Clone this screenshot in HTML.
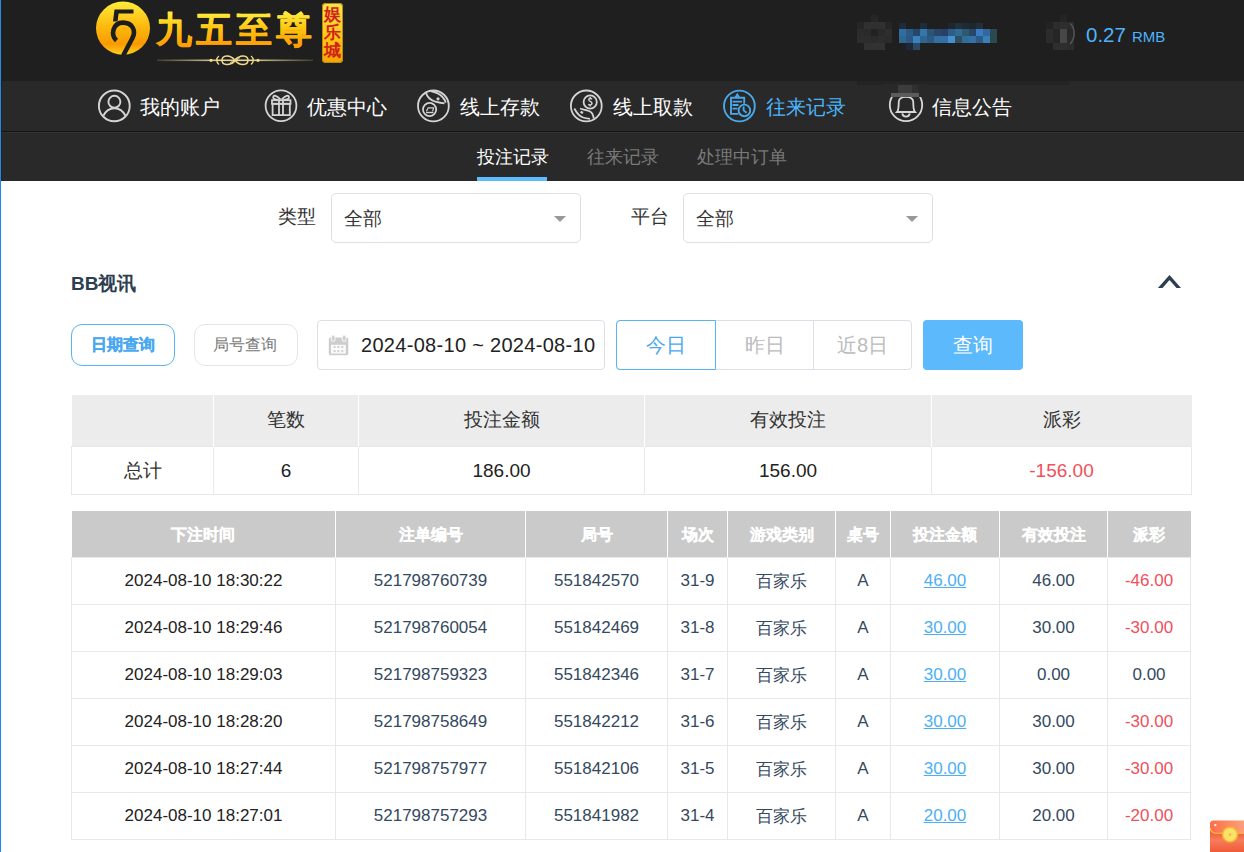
<!DOCTYPE html>
<html><head><meta charset="utf-8">
<style>
*{margin:0;padding:0;box-sizing:border-box}
html,body{width:1244px;height:852px;overflow:hidden;background:#fff;font-family:"Liberation Sans",sans-serif;color:#333}
.a{position:absolute}
.hdr{left:0;top:0;width:1244px;height:81px;background:#1f1f1f}
.nav{left:0;top:81px;width:1244px;height:50px;background:#292929}
.navl1{left:0;top:131px;width:1244px;height:1px;background:#121212}
.navl2{left:0;top:132px;width:1244px;height:1px;background:#333}
.sub{left:0;top:133px;width:1244px;height:48px;background:#292929}
.lb{left:0;top:0;width:1px;height:852px;background:#1a8cf0}
.lb2{left:1px;top:0;width:1px;height:181px;background:#2a211c}
.ni{font-size:20px;line-height:20px;color:#fff;white-space:nowrap}
.ic{width:33px;height:33px}
.st{font-size:18px;line-height:18px;white-space:nowrap}
.lbl{font-size:19px;line-height:19px;color:#333}
.sel{border:1px solid #dcdfe6;border-radius:5px;height:50px;width:250px;background:#fff}
.sel .v{position:absolute;left:12px;top:15px;font-size:19px;line-height:19px;color:#333}
.sel .ar{position:absolute;right:14px;top:22px;width:0;height:0;border-left:6px solid transparent;border-right:6px solid transparent;border-top:6px solid #999}
table{border-collapse:collapse;table-layout:fixed}
.sum{left:71px;top:395px;width:1120px}
.sum th{background:#ececec;height:51px;font-weight:normal;font-size:19px;color:#333;border-left:1px solid #fff}
.sum td{height:48px;font-size:19px;color:#222;text-align:center;border:1px solid #e8e8e8;padding-top:2px}
.sum td:first-child{color:#333}
.mt{left:71px;top:511px;width:1119px}
.mt th{background:#cacaca;height:46px;font-weight:bold;font-size:16px;color:#fff;border-left:1px solid #fff;padding-top:3px;-webkit-text-stroke:0.2px #fff}
.mt td{height:47px;font-size:17px;color:#34495e;text-align:center;border:1px solid #e8e8e8;padding-top:1px}
.mt td:first-child{color:#222}
.lk{color:#4db0f5;text-decoration:underline}
td.rd,.rd{color:#f0505a}
</style></head>
<body>
<div class="a hdr"></div>
<div class="a nav"></div>
<div class="a navl1"></div>
<div class="a navl2"></div>
<div class="a sub"></div>
<div class="a" style="left:857px;top:81px;width:213px;height:4px;background:#242424"></div>
<div class="a lb"></div>
<div class="a lb2"></div>

<!-- LOGO -->
<svg class="a" style="left:92px;top:0" width="60" height="60" viewBox="0 0 60 60">
<defs><linearGradient id="gc" x1="0" y1="0" x2="0" y2="1"><stop offset="0" stop-color="#ffec3a"/><stop offset="0.45" stop-color="#fdbb10"/><stop offset="0.8" stop-color="#f99a00"/><stop offset="1" stop-color="#ffd21e"/></linearGradient></defs>
<ellipse cx="31" cy="28.2" rx="27" ry="26.6" fill="url(#gc)"/>
<path d="M22.5 9.5 L41.5 9.5 L41.5 13.6 L26.6 13.6 L25.6 21.2 L21 21.6 Z" fill="#1d1d1d"/>
<path d="M24.5 40.5 C18.5 35 20.5 22.8 31 22.6 C40.5 22.6 44.5 31 40.2 38.5 L31.2 55.5" fill="none" stroke="#1d1d1d" stroke-width="4.6"/>
</svg>
<svg class="a" style="left:150px;top:0" width="170" height="52" viewBox="0 0 170 52">
<defs><linearGradient id="gt" x1="0" y1="0" x2="0" y2="1" gradientUnits="objectBoundingBox"><stop offset="0.1" stop-color="#ffea3c"/><stop offset="0.5" stop-color="#ffc20e"/><stop offset="1" stop-color="#ff9200"/></linearGradient></defs>
<text x="6" y="42" font-size="36" font-weight="bold" letter-spacing="4" fill="url(#gt)" stroke="url(#gt)" stroke-width="0.5" stroke-linejoin="round">九五至尊</text>
</svg>
<svg class="a" style="left:150px;top:50px" width="170" height="18" viewBox="0 0 170 18">
<defs><linearGradient id="gl" x1="0" x2="1"><stop offset="0" stop-color="#c8b67a" stop-opacity="0.2"/><stop offset="0.4" stop-color="#e6d59a"/><stop offset="0.6" stop-color="#e6d59a"/><stop offset="1" stop-color="#c8b67a" stop-opacity="0.2"/></linearGradient></defs>
<rect x="7" y="9.5" width="156" height="1.6" fill="url(#gl)"/>
<circle cx="61" cy="10.3" r="1.6" fill="#f2dc8a"/><circle cx="108" cy="10.3" r="1.6" fill="#f2dc8a"/>
<path d="M69 6 C66 8 66 12.5 69 14.5 M101 6 C104 8 104 12.5 101 14.5" fill="none" stroke="#f2dc8a" stroke-width="1.3"/>
<path d="M85 10.3 C80 4 72 5 72 10.3 C72 15.5 80 16.5 85 10.3 C90 4 98 5 98 10.3 C98 15.5 90 16.5 85 10.3 Z" fill="none" stroke="#f2dc8a" stroke-width="1.5"/>
<path d="M80 13 L88 7 M82 14 L90 7.5" stroke="#e8d490" stroke-width="0.9"/>
</svg>
<div class="a" style="left:322px;top:3px;width:21px;height:60px;border-radius:4px;background:linear-gradient(#ffe64a,#ffc414 60%,#f5a400);box-shadow:0 0 0 1px #b98a10 inset"></div>
<div class="a" style="left:324px;top:6px;width:17px;font-size:17px;line-height:18px;font-weight:bold;color:#d0201a;text-align:center">娱乐城</div>


<!-- header right -->
<div class="a" style="left:871px;top:15px;width:7px;height:7px;background:#262626"></div>
<div class="a" style="left:857px;top:22px;width:7px;height:7px;background:#262626"></div>
<div class="a" style="left:864px;top:22px;width:7px;height:7px;background:#303030"></div>
<div class="a" style="left:871px;top:22px;width:7px;height:7px;background:#303030"></div>
<div class="a" style="left:878px;top:22px;width:7px;height:7px;background:#303030"></div>
<div class="a" style="left:885px;top:22px;width:7px;height:7px;background:#262626"></div>
<div class="a" style="left:857px;top:29px;width:7px;height:7px;background:#2c2c2c"></div>
<div class="a" style="left:864px;top:29px;width:7px;height:7px;background:#2a2a2a"></div>
<div class="a" style="left:871px;top:29px;width:7px;height:7px;background:#222222"></div>
<div class="a" style="left:878px;top:29px;width:7px;height:7px;background:#2a2a2a"></div>
<div class="a" style="left:885px;top:29px;width:7px;height:7px;background:#2e2e2e"></div>
<div class="a" style="left:857px;top:36px;width:7px;height:7px;background:#2d2d2d"></div>
<div class="a" style="left:864px;top:36px;width:7px;height:7px;background:#2d2d2d"></div>
<div class="a" style="left:871px;top:36px;width:7px;height:7px;background:#2b2b2b"></div>
<div class="a" style="left:878px;top:36px;width:7px;height:7px;background:#2d2d2d"></div>
<div class="a" style="left:885px;top:36px;width:7px;height:7px;background:#2b2b2b"></div>
<div class="a" style="left:864px;top:43px;width:7px;height:7px;background:#323232"></div>
<div class="a" style="left:871px;top:43px;width:7px;height:7px;background:#323232"></div>
<div class="a" style="left:878px;top:43px;width:7px;height:7px;background:#323232"></div>
<div class="a" style="left:899px;top:23px;width:7px;height:6px;background:#1f2b38"></div>
<div class="a" style="left:920px;top:23px;width:7px;height:6px;background:#1f2c3a"></div>
<div class="a" style="left:948px;top:23px;width:7px;height:6px;background:#1e2630"></div>
<div class="a" style="left:955px;top:23px;width:7px;height:6px;background:#22303c"></div>
<div class="a" style="left:962px;top:23px;width:7px;height:6px;background:#1f2a36"></div>
<div class="a" style="left:969px;top:23px;width:7px;height:6px;background:#1e2630"></div>
<div class="a" style="left:976px;top:23px;width:7px;height:6px;background:#222e3a"></div>
<div class="a" style="left:899px;top:29px;width:7px;height:7px;background:#2f6ea3"></div>
<div class="a" style="left:906px;top:29px;width:7px;height:7px;background:#2b5a85"></div>
<div class="a" style="left:913px;top:29px;width:7px;height:7px;background:#27466a"></div>
<div class="a" style="left:920px;top:29px;width:7px;height:7px;background:#3476a8"></div>
<div class="a" style="left:927px;top:29px;width:7px;height:7px;background:#2c5573"></div>
<div class="a" style="left:934px;top:29px;width:7px;height:7px;background:#29476b"></div>
<div class="a" style="left:941px;top:29px;width:7px;height:7px;background:#28416a"></div>
<div class="a" style="left:948px;top:29px;width:7px;height:7px;background:#2d5c85"></div>
<div class="a" style="left:955px;top:29px;width:7px;height:7px;background:#306a96"></div>
<div class="a" style="left:962px;top:29px;width:7px;height:7px;background:#2e5a70"></div>
<div class="a" style="left:969px;top:29px;width:7px;height:7px;background:#27466a"></div>
<div class="a" style="left:976px;top:29px;width:7px;height:7px;background:#3a7bbf"></div>
<div class="a" style="left:983px;top:29px;width:7px;height:7px;background:#3466a0"></div>
<div class="a" style="left:990px;top:29px;width:7px;height:7px;background:#2a4a50"></div>
<div class="a" style="left:899px;top:36px;width:7px;height:7px;background:#2f6793"></div>
<div class="a" style="left:906px;top:36px;width:7px;height:7px;background:#2c5785"></div>
<div class="a" style="left:913px;top:36px;width:7px;height:7px;background:#3a82bd"></div>
<div class="a" style="left:920px;top:36px;width:7px;height:7px;background:#2f6591"></div>
<div class="a" style="left:927px;top:36px;width:7px;height:7px;background:#2d5a85"></div>
<div class="a" style="left:934px;top:36px;width:7px;height:7px;background:#336fa3"></div>
<div class="a" style="left:941px;top:36px;width:7px;height:7px;background:#3470a8"></div>
<div class="a" style="left:948px;top:36px;width:7px;height:7px;background:#4590d0"></div>
<div class="a" style="left:955px;top:36px;width:7px;height:7px;background:#2c5060"></div>
<div class="a" style="left:962px;top:36px;width:7px;height:7px;background:#316d9a"></div>
<div class="a" style="left:969px;top:36px;width:7px;height:7px;background:#3570a8"></div>
<div class="a" style="left:976px;top:36px;width:7px;height:7px;background:#2d5a85"></div>
<div class="a" style="left:983px;top:36px;width:7px;height:7px;background:#3a80b8"></div>
<div class="a" style="left:990px;top:36px;width:7px;height:7px;background:#2a4a50"></div>
<div class="a" style="left:906px;top:43px;width:7px;height:7px;background:#1f2838"></div>
<div class="a" style="left:913px;top:43px;width:7px;height:7px;background:#2c4a62"></div>
<div class="a" style="left:1060px;top:15px;width:7px;height:7px;background:#242424"></div>
<div class="a" style="left:1046px;top:22px;width:7px;height:7px;background:#232323"></div>
<div class="a" style="left:1053px;top:22px;width:7px;height:7px;background:#2d2d2d"></div>
<div class="a" style="left:1060px;top:22px;width:7px;height:7px;background:#2e2e2e"></div>
<div class="a" style="left:1067px;top:22px;width:7px;height:7px;background:#2c2c2c"></div>
<div class="a" style="left:1046px;top:29px;width:7px;height:7px;background:#2c2c2c"></div>
<div class="a" style="left:1053px;top:29px;width:7px;height:7px;background:#262626"></div>
<div class="a" style="left:1060px;top:29px;width:7px;height:7px;background:#474747"></div>
<div class="a" style="left:1067px;top:29px;width:7px;height:7px;background:#282828"></div>
<div class="a" style="left:1046px;top:36px;width:7px;height:7px;background:#2c2c2c"></div>
<div class="a" style="left:1053px;top:36px;width:7px;height:7px;background:#262626"></div>
<div class="a" style="left:1060px;top:36px;width:7px;height:7px;background:#474747"></div>
<div class="a" style="left:1067px;top:36px;width:7px;height:7px;background:#2a2a2a"></div>
<div class="a" style="left:1053px;top:43px;width:7px;height:7px;background:#2e2e2e"></div>
<div class="a" style="left:1060px;top:43px;width:7px;height:7px;background:#2e2e2e"></div>
<div class="a" style="left:1067px;top:43px;width:7px;height:7px;background:#2c2c2c"></div>
<svg class="a" style="left:1060px;top:18px" width="20" height="32"><path d="M10 5.5 C15 9 16 20 10 26" fill="none" stroke="#555" stroke-width="1.5"/></svg>

<div class="a" style="left:1086px;top:23px;font-size:20.5px;line-height:24px;color:#4db3fb">0.27</div>
<div class="a" style="left:1132px;top:28px;font-size:15px;line-height:18px;color:#4db3fb">RMB</div>


<!-- NAV ICONS -->
<svg class="a" style="left:94px;top:86px" width="40" height="40" viewBox="0 0 40 40" fill="none" stroke="#d4d4d4" stroke-width="1.9">
<circle cx="20.3" cy="19.9" r="15.4"/><circle cx="20.4" cy="15.8" r="6"/><path d="M9.3 29.8 C12 24.5 16 22.2 20.4 22.2 C24.8 22.2 28.8 24.5 31.5 29.8"/></svg>
<svg class="a" style="left:261px;top:86px" width="40" height="40" viewBox="0 0 40 40" fill="none" stroke="#d4d4d4" stroke-width="1.8">
<circle cx="20" cy="19.8" r="15.4"/><rect x="11" y="14.2" width="18.5" height="3.6"/><rect x="11.6" y="17.8" width="17.2" height="11.3"/><path d="M18 14.2 V29.1 M22 14.2 V29.1"/><path d="M19.6 13.6 C16 9.5 12.5 8.8 12.2 11 C12 12.8 14 13.8 17.5 14"/><path d="M20.6 13.6 C24.2 9.5 27.7 8.8 28 11 C28.2 12.8 26.2 13.8 22.7 14"/></svg>
<svg class="a" style="left:413px;top:86px" width="40" height="40" viewBox="0 0 40 40" fill="none" stroke="#d4d4d4" stroke-width="1.8">
<circle cx="20.4" cy="19.9" r="15.4"/><circle cx="16.6" cy="23.5" r="6.6"/><path d="M13 26.5 H20.5" stroke-width="1.4"/><path d="M13.4 25.3 L15.2 21.8 H20.6 L19.6 25.3" stroke-width="1.2"/>
<path d="M12.6 5.8 C14 11 17.5 14.2 22 15.5 C25 16.3 27.5 17 31.5 17.3"/><path d="M17.8 5 C22 6 26 7.5 28.5 10 C30.5 12 32.5 14.5 32.5 16.8"/><circle cx="25" cy="12.8" r="1.6" fill="#d4d4d4" stroke="none"/></svg>
<svg class="a" style="left:566px;top:86px" width="40" height="40" viewBox="0 0 40 40" fill="none" stroke="#d4d4d4" stroke-width="1.8">
<circle cx="20.3" cy="19.9" r="15.4"/><circle cx="24.2" cy="16" r="6.6"/><path d="M26 13.2 C25 12 22.5 12.3 22.8 14 C23 15.5 26 15.5 26 17.3 C26 19.2 23.2 19.5 22.3 18.3 M24.2 11 V12.2 M24.2 19.4 V20.6" stroke-width="1.5"/>
<path d="M8.3 22.5 C10.5 26.5 13.5 30.5 17 31.5 C19.5 32.3 22 32.6 24 32.8"/><path d="M14 22.5 C17.5 23.5 20 24 23 25 C26 26.2 27.5 29 27.6 32.6"/><path d="M14.5 25.8 L17 27" stroke-width="2.2"/></svg>
<svg class="a" style="left:719px;top:86px" width="40" height="40" viewBox="0 0 40 40" fill="none" stroke="#4aa8ea" stroke-width="1.9">
<circle cx="20.4" cy="20" r="15.4"/><path d="M19.5 27.9 H12 V11.8 H25.2 V17.8"/><path d="M16.5 11.6 L18.3 8.6 L20.1 11.6"/><path d="M13.5 15.6 H23 M13.5 19 H19.5 M13.5 22.6 H18.5"/><circle cx="25.4" cy="24.4" r="5.8"/><path d="M24.6 20.6 V24.4 L27.6 26.8"/></svg>
<svg class="a" style="left:886px;top:85px" width="40" height="40" viewBox="0 0 40 40" fill="none" stroke="#d8d8d8" stroke-width="1.8">
<circle cx="20" cy="20" r="16.2"/><path d="M11 27 C13 25 12.5 20 12.8 16.5 C13.2 12.8 16 11.8 20 11.8 C24 11.8 26.8 12.8 27.2 16.5 C27.5 20 27 25 29 27 Z"/><path d="M16.3 28.3 C16.5 30.5 18 31.6 20 31.6 C22 31.6 23.5 30.5 23.7 28.3"/></svg>
<div class="a" style="left:884px;top:84px;width:44px;height:13px;background:#292929"></div>
<div class="a" style="left:898px;top:85px;width:14px;height:8px;background:#3c3c3c"></div>
<div class="a" style="left:891px;top:93px;width:28px;height:4px;background:#5c5c5c"></div>
<div class="a" style="left:912px;top:85px;width:6px;height:8px;background:#303030"></div>

<!-- NAV -->
<div class="a ni" style="left:140px;top:97px">我的账户</div>
<div class="a ni" style="left:307px;top:97px">优惠中心</div>
<div class="a ni" style="left:460px;top:97px">线上存款</div>
<div class="a ni" style="left:613px;top:97px">线上取款</div>
<div class="a ni" style="left:766px;top:97px;color:#4bb4fb">往来记录</div>
<div class="a ni" style="left:932px;top:97px">信息公告</div>

<!-- SUBTABS -->
<div class="a st" style="left:477px;top:148px;color:#fff">投注记录</div>
<div class="a st" style="left:587px;top:148px;color:#7a7a7a">往来记录</div>
<div class="a st" style="left:697px;top:148px;color:#7a7a7a">处理中订单</div>
<div class="a" style="left:477px;top:177px;width:70px;height:4px;background:#5bbcff"></div>

<!-- FILTERS -->
<div class="a lbl" style="left:278px;top:207px">类型</div>
<div class="a sel" style="left:331px;top:193px"><span class="v">全部</span><span class="ar"></span></div>
<div class="a lbl" style="left:631px;top:207px">平台</div>
<div class="a sel" style="left:683px;top:193px"><span class="v">全部</span><span class="ar"></span></div>

<!-- section title -->
<div class="a" style="left:71px;top:274px;font-size:19px;line-height:19px;font-weight:bold;color:#2c3e50">BB视讯</div>
<svg class="a" style="left:1150px;top:270px" width="40" height="22" viewBox="1150 270 40 22"><path d="M1157.9 288 L1169.5 274.9 L1181 288 L1176.5 288 L1169.5 279.9 L1162.5 288 Z" fill="#2c3e50"/></svg>

<!-- query row -->
<div class="a" style="left:71px;top:324px;width:104px;height:42px;border:1px solid #5ab4f0;border-radius:11px"></div>
<div class="a" style="left:91px;top:337px;font-size:16px;line-height:16px;font-weight:bold;color:#4aa8f0;-webkit-text-stroke:0.3px #4aa8f0">日期查询</div>
<div class="a" style="left:194px;top:324px;width:104px;height:42px;border:1px solid #e6e6e6;border-radius:11px"></div>
<div class="a" style="left:213px;top:337px;font-size:16px;line-height:16px;color:#777">局号查询</div>

<div class="a" style="left:317px;top:320px;width:288px;height:50px;border:1px solid #dcdfe6;border-radius:4px"></div>
<svg class="a" style="left:324px;top:330px" width="30" height="30" viewBox="0 0 30 30">
<rect x="4.8" y="7.4" width="19.5" height="17.8" rx="1.6" fill="#cdcdcd"/>
<rect x="7" y="14.8" width="14.8" height="8.8" fill="#fafafa"/>
<rect x="7.4" y="5.3" width="3.6" height="6" rx="1.8" fill="#cdcdcd" stroke="#f2f2f2" stroke-width="1.2"/>
<rect x="18.4" y="5.3" width="3.6" height="6" rx="1.8" fill="#cdcdcd" stroke="#f2f2f2" stroke-width="1.2"/>
<g fill="#d0d0d0"><rect x="9.6" y="16" width="2" height="2"/><rect x="13.4" y="16" width="2" height="2"/><rect x="17.3" y="16" width="2" height="2"/><rect x="9.6" y="20.1" width="2" height="2"/><rect x="13.4" y="20.1" width="2" height="2"/><rect x="17.3" y="20.1" width="2" height="2"/></g>
</svg>
<div class="a" style="left:361px;top:335px;font-size:20px;line-height:20px;color:#222;white-space:nowrap;letter-spacing:0.3px">2024-08-10 ~ 2024-08-10</div>

<div class="a" style="left:616px;top:320px;width:296px;height:50px;border:1px solid #dcdfe6;border-radius:4px"></div>
<div class="a" style="left:616px;top:320px;width:100px;height:50px;border:1px solid #5ab4f0;border-radius:4px 0 0 4px"></div>
<div class="a" style="left:813px;top:321px;width:1px;height:48px;background:#dcdfe6"></div>
<div class="a" style="left:646px;top:335px;font-size:20px;line-height:20px;color:#4aa8f0">今日</div>
<div class="a" style="left:745px;top:335px;font-size:20px;line-height:20px;color:#bbb">昨日</div>
<div class="a" style="left:837px;top:335px;font-size:20px;line-height:20px;color:#bbb">近8日</div>
<div class="a" style="left:923px;top:320px;width:100px;height:50px;background:#5bb9fc;border-radius:4px"></div>
<div class="a" style="left:953px;top:335px;font-size:20px;line-height:20px;color:#fff">查询</div>

<!-- summary -->
<table class="a sum">
<colgroup><col style="width:142px"><col style="width:145px"><col style="width:286px"><col style="width:287px"><col style="width:260px"></colgroup>
<tr><th style="border-left:none"></th><th>笔数</th><th>投注金额</th><th>有效投注</th><th>派彩</th></tr>
<tr><td>总计</td><td>6</td><td>186.00</td><td>156.00</td><td class="rd">-156.00</td></tr>
</table>

<!-- main table -->
<table class="a mt">
<colgroup><col style="width:264px"><col style="width:190px"><col style="width:142px"><col style="width:60px"><col style="width:108px"><col style="width:55px"><col style="width:109px"><col style="width:108px"><col style="width:83px"></colgroup>
<tr><th style="border-left:none">下注时间</th><th>注单编号</th><th>局号</th><th>场次</th><th>游戏类别</th><th>桌号</th><th>投注金额</th><th>有效投注</th><th>派彩</th></tr>
<tr><td>2024-08-10 18:30:22</td><td>521798760739</td><td>551842570</td><td>31-9</td><td>百家乐</td><td>A</td><td><span class="lk">46.00</span></td><td>46.00</td><td class="rd">-46.00</td></tr>
<tr><td>2024-08-10 18:29:46</td><td>521798760054</td><td>551842469</td><td>31-8</td><td>百家乐</td><td>A</td><td><span class="lk">30.00</span></td><td>30.00</td><td class="rd">-30.00</td></tr>
<tr><td>2024-08-10 18:29:03</td><td>521798759323</td><td>551842346</td><td>31-7</td><td>百家乐</td><td>A</td><td><span class="lk">30.00</span></td><td>0.00</td><td>0.00</td></tr>
<tr><td>2024-08-10 18:28:20</td><td>521798758649</td><td>551842212</td><td>31-6</td><td>百家乐</td><td>A</td><td><span class="lk">30.00</span></td><td>30.00</td><td class="rd">-30.00</td></tr>
<tr><td>2024-08-10 18:27:44</td><td>521798757977</td><td>551842106</td><td>31-5</td><td>百家乐</td><td>A</td><td><span class="lk">30.00</span></td><td>30.00</td><td class="rd">-30.00</td></tr>
<tr><td>2024-08-10 18:27:01</td><td>521798757293</td><td>551841982</td><td>31-4</td><td>百家乐</td><td>A</td><td><span class="lk">20.00</span></td><td>20.00</td><td class="rd">-20.00</td></tr>
</table>

<svg class="a" style="left:1210px;top:820px" width="34" height="32" viewBox="0 0 34 32">
<defs><linearGradient id="eb" x1="0" y1="0" x2="0" y2="1"><stop offset="0" stop-color="#ec4a2c"/><stop offset="0.5" stop-color="#f77d5a"/><stop offset="1" stop-color="#f05a3a"/></linearGradient>
<linearGradient id="ef" x1="0" y1="0" x2="1" y2="0"><stop offset="0" stop-color="#fb6e48"/><stop offset="1" stop-color="#fca078"/></linearGradient></defs>
<path d="M0 8 V32 H34 V8 Z" fill="url(#eb)"/>
<path d="M0 4 Q0 0.6 3.5 0.6 H34 V13.2 H6.5 Q0 13.2 0 8 Z" fill="url(#ef)"/>
<path d="M0.3 8 Q0.5 13.2 6.5 13.2 H34" fill="none" stroke="#ffc23a" stroke-width="1.1"/>
<circle cx="20" cy="14.6" r="7.4" fill="#fbe06a" stroke="#f5b82a" stroke-width="1.5"/>
<circle cx="20" cy="14.6" r="1.2" fill="#f6b030"/>
<circle cx="5.3" cy="5.1" r="1.2" fill="#fff" opacity="0.85"/>
</svg>
</body></html>
